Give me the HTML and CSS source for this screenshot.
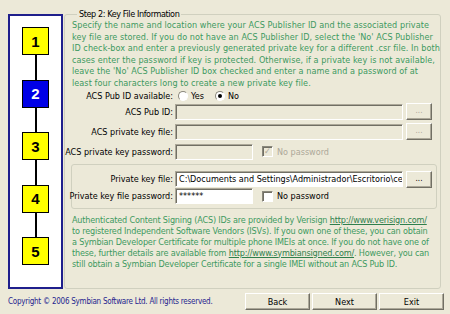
FILE: index.html
```html
<!DOCTYPE html>
<html lang="en">
<head>
    <meta charset="UTF-8">
    <title>Symbian Signed - Key File Information</title>
    <link rel="stylesheet" href="styles.css">
</head>
<body>
    <div class="window">
        <div class="main">
            <!-- Wizard steps -->
            <div class="steps">
                <div class="step">1</div>
                <div class="link"></div>
                <div class="step current">2</div>
                <div class="link"></div>
                <div class="step">3</div>
                <div class="link"></div>
                <div class="step">4</div>
                <div class="link"></div>
                <div class="step">5</div>
            </div>

            <fieldset class="group">
                <legend>Step 2: Key File Information</legend>
                <p class="info">Specify the name and location where your ACS Publisher ID and the associated private<br>
                key file are stored. If you do not have an ACS Publisher ID, select the 'No' ACS Publisher<br>
                ID check-box and enter a previously generated private key for a different .csr file. In both<br>
                cases enter the password if key is protected. Otherwise, if a private key is not available,<br>
                leave the 'No' ACS Publisher ID box checked and enter a name and a password of at<br>
                least four characters long to create a new private key file.</p>

                <div class="row radio-row">
                    <span class="lbl">ACS Pub ID available:</span>
                    <span class="radio"></span><span class="opt">Yes</span>
                    <span class="radio checked"></span><span class="opt">No</span>
                </div>
                <div class="row">
                    <span class="lbl">ACS Pub ID:</span>
                    <span class="edit"></span>
                    <span class="browse disabled">...</span>
                </div>
                <div class="row">
                    <span class="lbl">ACS private key file:</span>
                    <span class="edit"></span>
                    <span class="browse disabled">...</span>
                </div>
                <div class="row">
                    <span class="lbl">ACS private key password:</span>
                    <span class="edit short"></span>
                    <span class="check checked disabled">&#10003;</span>
                    <span class="check-text disabled">No password</span>
                </div>

                <!-- Private key box -->
                <div class="keybox">
                    <div class="row tight">
                        <span class="lbl">Private key file:</span>
                        <span class="edit white">C:\Documents and Settings\Administrador\Escritorio\ce</span>
                        <span class="browse">...</span>
                    </div>
                    <div class="row tight">
                        <span class="lbl">Private key file password:</span>
                        <span class="edit white short">******</span>
                        <span class="check"></span>
                        <span class="check-text">No password</span>
                    </div>
                </div>

                <p class="info note">Authenticated Content Signing (ACS) IDs are provided by Verisign <a href="#">http://www.verisign.com/</a><br>
                to registered Independent Software Vendors (ISVs). If you own one of these, you can obtain<br>
                a Symbian Developer Certificate for multiple phone IMEIs at once. If you do not have one of<br>
                these, further details are available from <a href="#">http://www.symbiansigned.com/</a>. However, you can<br>
                still obtain a Symbian Developer Certificate for a single IMEI without an ACS Pub ID.</p>
            </fieldset>
        </div>

        <div class="footer">
            <span class="copyright">Copyright &copy; 2006 Symbian Software Ltd. All rights reserved.</span>
            <div class="buttons">
                <button class="btn">Back</button>
                <button class="btn">Next</button>
                <button class="btn">Exit</button>
            </div>
        </div>
    </div>
</body>
</html>
```

FILE: styles.css
```css
body {
    margin: 0;
    background-color: #ece9d8;
    font-family: "DejaVu Sans Condensed", "Liberation Sans", sans-serif;
    font-size: 9px;
    color: #000;
}
.window {
    width: 450px;
    height: 314px;
    overflow: hidden;
}
.main {
    display: flex;
    gap: 1px;
    padding: 8px 0 0 8px;
}

/* Step column */
.steps {
    margin-top: 6px;
    width: 55px;
    height: 275px;
    box-sizing: border-box;
    border: 2px solid #1f1f8c;
    background: #fff;
    display: flex;
    flex-direction: column;
    align-items: center;
    padding-top: 11px;
}
.step {
    width: 27px;
    height: 28px;
    box-sizing: border-box;
    border: 1px solid #000;
    background: #ffff00;
    font-family: "Liberation Sans", sans-serif;
    font-weight: bold;
    font-size: 15px;
    display: flex;
    align-items: center;
    justify-content: center;
}
.step.current {
    background: #0000e6;
    color: #fff;
}
.link {
    width: 2px;
    height: 24.5px;
    background: #000;
}

/* Group box */
.group {
    margin: 0;
    padding: 0 4px 0 7px;
    width: 377px;
    height: 281px;
    box-sizing: border-box;
    border: 1px solid #d0d0bf;
    border-radius: 3px;
    min-width: 0;
}
.group legend {
    margin-left: 5px;
    padding: 0 2px;
    line-height: 12px;
    letter-spacing: -0.4px;
}
.info {
    margin: 0;
    color: #3d9960;
    line-height: 11.6px;
    letter-spacing: 0.06px;
    white-space: nowrap;
}
.info a {
    color: #2f7f4c;
}
.info.note {
    margin-top: 6px;
    line-height: 11px;
    letter-spacing: -0.17px;
}

/* Form rows */
.row {
    display: flex;
    align-items: center;
    height: 20px;
}
.row.radio-row {
    height: 12px;
}
.row.tight {
    height: 17px;
}
.lbl {
    width: 101px;
    flex: none;
    display: flex;
    justify-content: flex-end;
    white-space: nowrap;
    margin-right: 2px;
}
.edit {
    width: 228px;
    height: 16px;
    flex: none;
    box-sizing: border-box;
    border: 1px solid;
    border-color: #aca899 #fff #fff #aca899;
    box-shadow: inset 1px 1px #716f64;
    background: #ece9d8;
    padding: 0 3px;
    line-height: 14px;
    white-space: nowrap;
    overflow: hidden;
}
.edit.white {
    background: #fff;
}
.edit.short {
    width: 78px;
}
.browse {
    width: 26px;
    height: 17px;
    margin-left: 3px;
    flex: none;
    box-sizing: border-box;
    border: 1px solid;
    border-color: #fff #716f64 #716f64 #fff;
    box-shadow: inset -1px -1px #aca899;
    display: flex;
    align-items: center;
    justify-content: center;
    font-size: 8px;
    padding-bottom: 2px;
}
.browse.disabled {
    color: #aca899;
}
.radio {
    width: 10px;
    height: 10px;
    box-sizing: border-box;
    border-radius: 50%;
    border: 1px solid;
    border-color: #8a887c #fff #fff #8a887c;
    background: #fff;
    margin-left: 3px;
    display: flex;
    align-items: center;
    justify-content: center;
}
.radio.checked::after {
    content: "";
    width: 4px;
    height: 4px;
    border-radius: 50%;
    background: #000;
}
.opt {
    margin-left: 3px;
    margin-right: 8px;
}
.check {
    width: 11px;
    height: 11px;
    box-sizing: border-box;
    border: 1px solid;
    border-color: #8a887c #fff #fff #8a887c;
    box-shadow: inset 1px 1px #716f64;
    background: #fff;
    margin-left: 9px;
    font-size: 9px;
    line-height: 9px;
    text-align: center;
    font-weight: bold;
}
.check.disabled {
    background: #ece9d8;
    color: #aca899;
}
.check-text {
    margin-left: 4px;
}
.check-text.disabled {
    color: #aca899;
}

/* Private key box */
.keybox {
    margin: 2px 0 0 -1px;
    width: 366px;
    height: 45px;
    box-sizing: border-box;
    border: 1px solid #d0d0bf;
    border-radius: 3px;
    padding-top: 6px;
}

/* Footer */
.footer {
    display: flex;
    align-items: center;
    justify-content: space-between;
    padding: 4px 6px 0 8px;
}
.copyright {
    font-size: 8px;
    letter-spacing: -0.25px;
    color: #25258f;
    white-space: nowrap;
}
.buttons {
    display: flex;
    gap: 2px;
}
.btn {
    width: 65px;
    height: 17px;
    padding: 0;
    box-sizing: border-box;
    border: 1px solid;
    border-color: #fff #716f64 #716f64 #fff;
    box-shadow: inset -1px -1px #aca899;
    background: #ece9d8;
    font-family: inherit;
    font-size: 9px;
    color: #000;
}
```
